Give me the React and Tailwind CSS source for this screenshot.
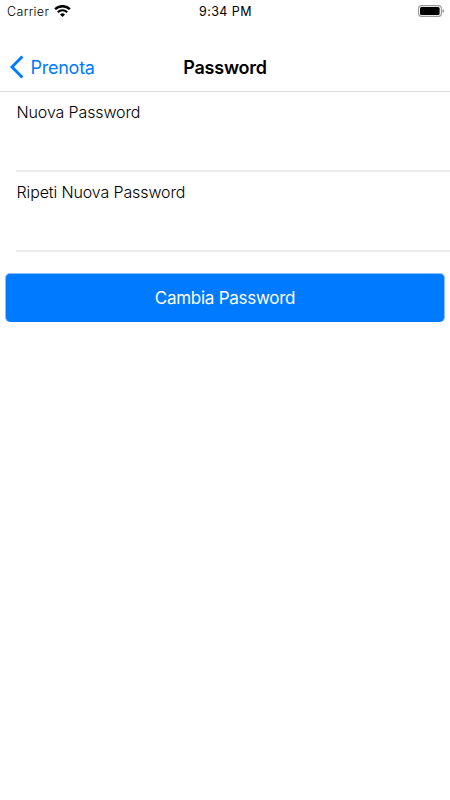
import React, { useState } from "react";

const fields = [
  { name: "newPassword", label: "Nuova Password" },
  { name: "repeatPassword", label: "Ripeti Nuova Password" },
];

const StatusBar = () => (
  <div className="grid grid-cols-3 items-center h-[23px] pl-[7px] pr-[6px] text-[12.5px] leading-[23px] text-black">
    <div className="flex items-center gap-[5px]">
      <span className="font-light tracking-[0.35px]">Carrier</span>
      <svg width="17" height="12" viewBox="0 0 17 12" fill="none" className="-mt-[2px]">
        <path d="M1.1 4.2a10.6 10.6 0 0 1 14.8 0" stroke="#000" strokeWidth="2.5" />
        <path d="M3.8 7.2a6.8 6.8 0 0 1 9.4 0" stroke="#000" strokeWidth="2.1" />
        <path d="M8.5 11.9L6 9.4a3.6 3.6 0 0 1 5 0z" fill="#000" />
      </svg>
    </div>
    <span className="text-center whitespace-nowrap tracking-[0.45px]">9:34 PM</span>
    <div className="flex justify-end">
      <svg width="26" height="12" viewBox="0 0 26 12" fill="none" className="-mt-[2px]">
        <rect x="0.6" y="0.6" width="22.8" height="10.8" rx="3" stroke="#999" strokeWidth="1.1" />
        <rect x="2" y="2" width="19.6" height="8" rx="1.5" fill="#000" />
        <path d="M24.6 4.2c1.6.7 1.6 2.9 0 3.6z" fill="#666" />
      </svg>
    </div>
  </div>
);

const App = () => {
  const [values, setValues] = useState({ newPassword: "", repeatPassword: "" });

  const handleChange = (key, value) => {
    setValues((prev) => ({ ...prev, [key]: value }));
  };

  return (
    <div className="min-h-screen bg-white font-['Inter',sans-serif]">
      <StatusBar />

      {/* Navigation bar */}
      <div className="grid grid-cols-3 items-center h-[69px] pt-[20px] pl-[10px] pr-[10px] border-b border-[#dcdcdc]">
        <button className="flex items-center gap-[6.5px] text-[#007aff] text-[18px] tracking-[-0.25px]">
          <svg width="14" height="24" viewBox="0 0 14 24" fill="none">
            <path d="M12.4 1.5L2 12l10.4 10.5" stroke="currentColor" strokeWidth="2.9" />
          </svg>
          <span>Prenota</span>
        </button>
        <h1 className="text-center text-[18px] tracking-[-0.25px] font-semibold text-black">Password</h1>
      </div>

      {/* Password fields */}
      <div className="pl-[16px]">
        {fields.map(({ name, label }) => (
          <div key={name} className="h-[80px] pt-[9px] border-b-2 border-[#ebebeb]">
            <label
              htmlFor={name}
              className="block pl-[0.5px] text-[16px] leading-[22px] tracking-[-0.12px] font-light text-black"
            >
              {label}
            </label>
            <input
              id={name}
              type="password"
              value={values[name]}
              onChange={(e) => handleChange(name, e.target.value)}
              className="block w-full h-[40px] outline-none bg-transparent"
            />
          </div>
        ))}
      </div>

      <div className="px-[5px] pt-[21px]">
        <button className="block w-full h-[49px] pt-[1px] rounded-[5px] border-x border-t border-[#8abfff] bg-[#007aff] text-[17px] tracking-[-0.27px] text-white">
          Cambia Password
        </button>
      </div>
    </div>
  );
};

export default App;
